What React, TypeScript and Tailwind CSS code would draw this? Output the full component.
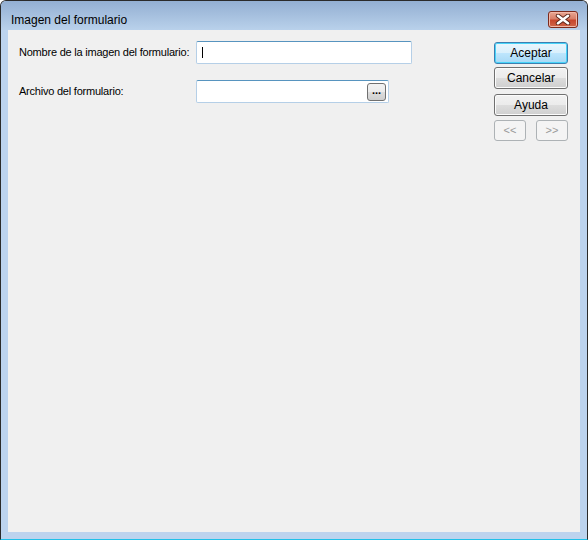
import React from "react";

const font = { fontFamily: '"Liberation Sans", Arial, sans-serif' };

function WinButton({
  label,
  isDefault = false,
  className = "",
}: {
  label: string;
  isDefault?: boolean;
  className?: string;
}) {
  return (
    <button
      type="button"
      className={`flex h-[22px] w-[74px] items-center justify-center rounded-[3px] border text-[12px] leading-none text-black ${
        isDefault
          ? "border-[#3c7fb1] bg-[linear-gradient(#eaf6fd_0%,#d9f0fc_50%,#bee6fd_50%,#a7d9f5_100%)] shadow-[inset_0_0_0_1px_#48d4f9]"
          : "border-[#707070] bg-[linear-gradient(#f2f2f2_0%,#ebebeb_50%,#dddddd_50%,#cfcfcf_100%)] shadow-[inset_0_0_0_1px_#fcfcfc]"
      } ${className}`}
    >
      {label}
    </button>
  );
}

function NavButton({ label }: { label: string }) {
  return (
    <button
      type="button"
      disabled
      className="flex h-[21px] w-[32px] items-center justify-center rounded-[3px] border border-[#adb2b5] bg-[#f4f4f4] text-[11px] leading-none text-[#9a9a9a]"
    >
      {label}
    </button>
  );
}

function CloseGlyph() {
  return (
    <svg width="16" height="11" viewBox="0 0 16 11">
      <path
        d="M3 1.8 L13 9.2 M13 1.8 L3 9.2"
        stroke="#5a2418"
        strokeWidth="4.4"
        strokeLinecap="round"
      />
      <path
        d="M3 1.8 L13 9.2 M13 1.8 L3 9.2"
        stroke="#ffffff"
        strokeWidth="2.6"
        strokeLinecap="round"
      />
    </svg>
  );
}

export default function App() {
  return (
    <div style={font} className="h-[540px] w-[588px] bg-white">
      <div className="flex h-[540px] w-[588px] flex-col rounded-t-[6px] border border-[#2a2a2a] border-b-[#20c0e8] bg-[#bcd3ee]">
        {/* title bar */}
        <div className="flex h-[29px] shrink-0 items-start justify-between rounded-t-[5px] bg-[linear-gradient(#93afd2,#b9d1eb)] pr-[9px]">
          <span className="pl-[10px] pt-[12px] text-[12px] leading-[15px] text-black">
            Imagen del formulario
          </span>
          <button
            type="button"
            aria-label="Cerrar"
            className="mt-[10px] flex h-[17px] w-[30px] items-center justify-center rounded-[3px] border border-[#7d2a1c] bg-[linear-gradient(#e9a793_0%,#d87f69_45%,#c7462c_55%,#d0664a_100%)] shadow-[inset_0_0_0_1px_#f0b8a8]"
          >
            <CloseGlyph />
          </button>
        </div>

        {/* client area */}
        <div className="mx-[7px] mb-[7px] flex flex-1 justify-between bg-[#f0f0f0] pr-[12px]">
          <div className="flex flex-col gap-[16px] pl-[11px] pt-[11px]">
            <div className="flex items-center">
              <label className="w-[177px] shrink-0 whitespace-nowrap text-[11px] leading-none tracking-[-0.22px] text-black">
                Nombre de la imagen del formulario:
              </label>
              <div className="flex h-[23px] w-[216px] items-center rounded-[2px] border border-[#b5cfe7] border-t-[#5794bf] bg-white pl-[5px]">
                <span className="h-[11px] w-px bg-black" />
              </div>
            </div>
            <div className="flex items-center">
              <label className="w-[177px] shrink-0 whitespace-nowrap text-[11px] leading-none tracking-[-0.22px] text-black">
                Archivo del formulario:
              </label>
              <div className="flex h-[23px] w-[193px] items-center justify-end rounded-[2px] border border-[#b5cfe7] border-t-[#5794bf] bg-white pr-[2px]">
                <button
                  type="button"
                  className="flex h-[18px] w-[19px] items-center justify-center rounded-[3px] border border-[#707070] bg-[linear-gradient(#f2f2f2_0%,#ebebeb_50%,#dddddd_50%,#cfcfcf_100%)] pb-[3px] text-[11px] font-bold leading-none text-black"
                >
                  ...
                </button>
              </div>
            </div>
          </div>

          <div className="flex flex-col pt-[12px]">
            <WinButton label="Aceptar" isDefault />
            <WinButton label="Cancelar" className="mt-[3px]" />
            <WinButton label="Ayuda" className="mt-[5px]" />
            <div className="mt-[4px] flex justify-between gap-[10px]">
              <NavButton label="<<" />
              <NavButton label=">>" />
            </div>
          </div>
        </div>
      </div>
    </div>
  );
}
